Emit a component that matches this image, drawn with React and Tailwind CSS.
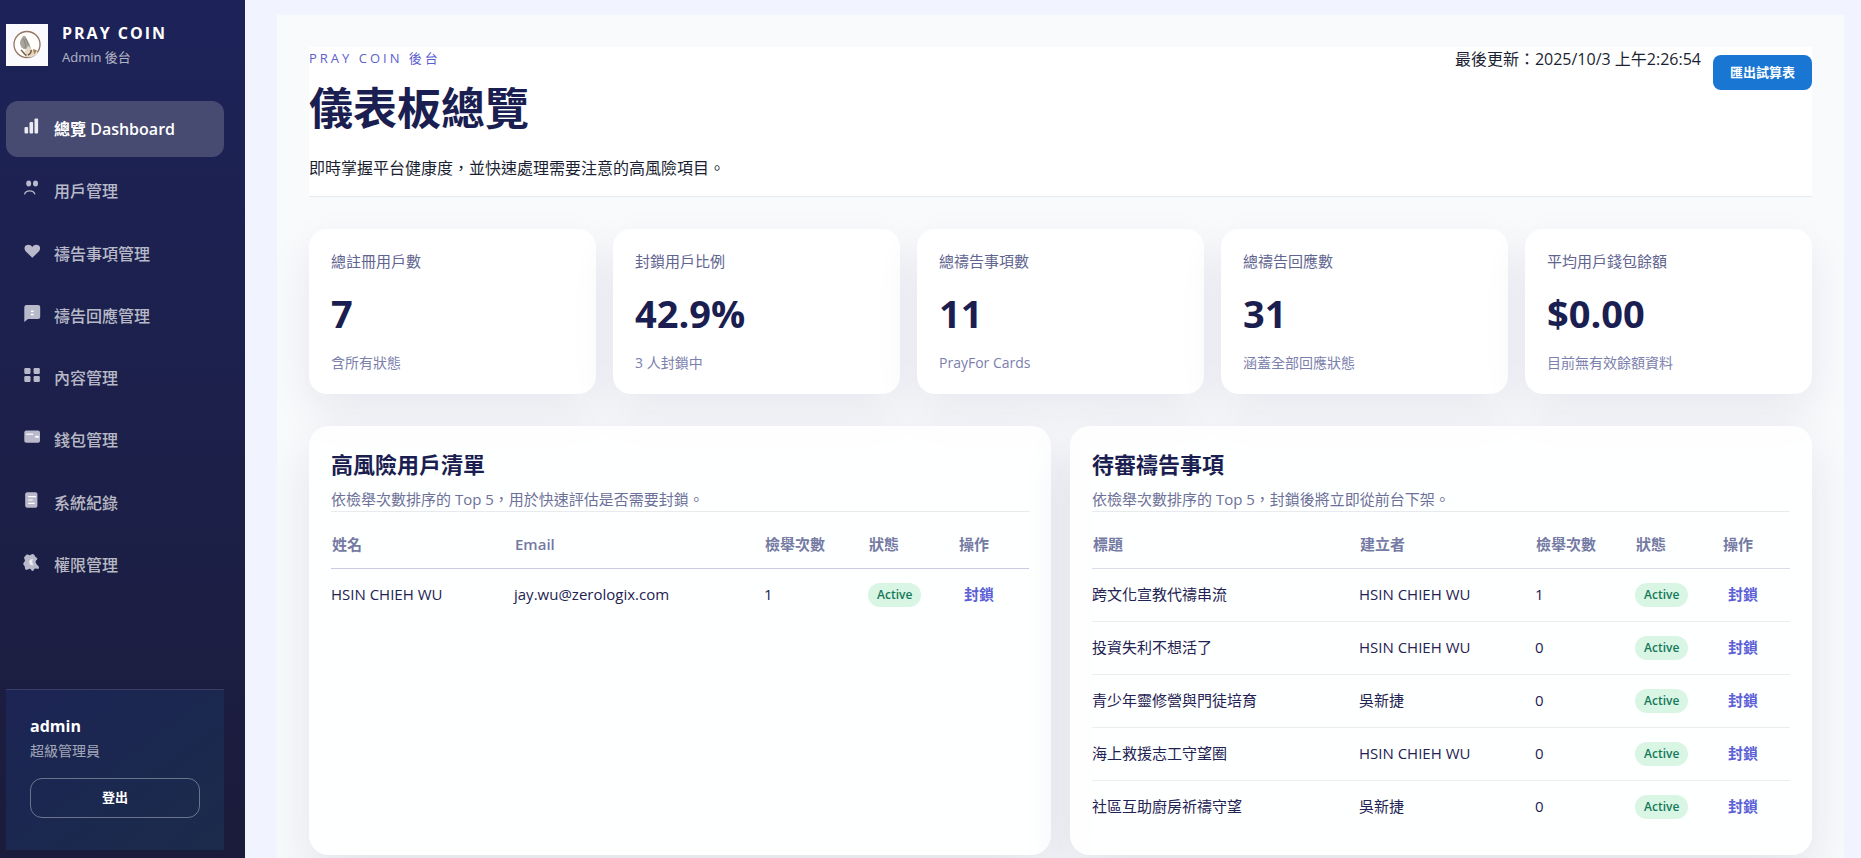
const NAV = [
  { label: "總覽 Dashboard", icon: "bars", active: true },
  { label: "用戶管理", icon: "users" },
  { label: "禱告事項管理", icon: "heart" },
  { label: "禱告回應管理", icon: "reply" },
  { label: "內容管理", icon: "grid" },
  { label: "錢包管理", icon: "wallet" },
  { label: "系統紀錄", icon: "log" },
  { label: "權限管理", icon: "gear" },
];

const STATS = [
  { label: "總註冊用戶數", value: "7", note: "含所有狀態" },
  { label: "封鎖用戶比例", value: "42.9%", note: "3 人封鎖中" },
  { label: "總禱告事項數", value: "11", note: "PrayFor Cards" },
  { label: "總禱告回應數", value: "31", note: "涵蓋全部回應狀態" },
  { label: "平均用戶錢包餘額", value: "$0.00", note: "目前無有效餘額資料" },
];

const USERS = [["HSIN CHIEH WU", "jay.wu@zerologix.com", 1]];

const PRAYERS = [
  ["跨文化宣教代禱串流", "HSIN CHIEH WU", 1],
  ["投資失利不想活了", "HSIN CHIEH WU", 0],
  ["青少年靈修營與門徒培育", "吳新捷", 0],
  ["海上救援志工守望圈", "HSIN CHIEH WU", 0],
  ["社區互助廚房祈禱守望", "吳新捷", 0],
];

const ICONS = {
  bars: (
    <g fill="currentColor">
      <rect x="0.500" y="9" width="3.600" height="6.500" rx="1" />
      <rect x="5.500" y="4" width="3.600" height="11.500" rx="1" />
      <rect x="10.500" y="0.500" width="3.600" height="15" rx="1" />
    </g>
  ),
  users: (
    <g>
      <ellipse cx="4.700" cy="3.500" rx="2.500" ry="2.900" fill="currentColor" />
      <ellipse cx="11.500" cy="3.500" rx="2.500" ry="2.900" fill="currentColor" />
      <path d="M.5 14.300c.6-2.400 2.600-3.500 5.200-3.500s4.600 1.100 5.200 3.500" fill="none" stroke="currentColor" strokeWidth="1.300" />
    </g>
  ),
  heart: (
    <path d="M8.300 14.800 1.600 8.200C0 6.400.2 3.800 1.800 2.600 3.900 1.200 6.800 1.600 8.300 4c1.500-2.400 4.400-2.800 6.500-1.400 1.600 1.200 1.800 3.800.2 5.600Z" fill="currentColor" />
  ),
  reply: (
    <g>
      <path d="M2.500 0h11.500A2.200 2.200 0 0 1 16.200 2.200v9.600a2.200 2.200 0 0 1-2.200 2.200H4l-3.700 2.900V2.200A2.200 2.200 0 0 1 2.500 0Z" fill="currentColor" />
      <rect x="6.800" y="5.400" width="3" height="1.500" rx=".7" fill="#fff" />
      <rect x="6.800" y="8.800" width="3" height="1.500" rx=".7" fill="#fff" />
    </g>
  ),
  grid: (
    <g fill="currentColor">
      <rect x="0.300" y="1" width="6.200" height="6" rx="1.200" />
      <rect x="9.600" y="1" width="6.200" height="6" rx="1.200" />
      <rect x="0.300" y="9" width="6.200" height="6" rx="1.200" />
      <rect x="9.600" y="9" width="6.200" height="6" rx="1.200" />
    </g>
  ),
  wallet: (
    <g>
      <rect x="0.300" y="1.500" width="15.700" height="12.300" rx="2" fill="currentColor" />
      <path d="M2 5.200H9.200" stroke="#fff" strokeWidth="1.200" />
      <rect x="11" y="6.800" width="4" height="1.900" rx=".9" fill="#fff" />
    </g>
  ),
  log: (
    <g>
      <rect x="1.200" y="0.200" width="12.200" height="15.600" rx="2" fill="currentColor" />
      <path d="M4.200 4.600h8M4.200 8h4.600M4.200 11.400h6.500" stroke="#fff" strokeWidth="1.200" />
    </g>
  ),
  gear: (
    <g>
      <path d="M2.300.8c1.200-.8 2.400.6 3.600.4C7.100 1 7.600-.2 9.300.2c1.700.3 1.300 2 2.300 2.800.8.600 2 .8 1.700 2-.2 1-1.600 1.300-1.700 2.500-.1 1.500 1 2.700 2 3.700 1 .8 1.900 2.300 1.200 3.300-1.200.7-2.700-.3-3.800 0-1.200.4-1 2.300-2.300 2.500-1.400.1-1.400-2-2.800-2.300-1.300-.2-2.200 1.300-3.800 1C.3 15.200 1.300 13.200.6 12.300 0 11.500-.9 10.700-.7 9.600c.2-1.200 1.700-1.700 1.700-3C1 5.400-.2 4.700.1 3.600.5 2.600 1.600 1.800 2.300.8Z" fill="currentColor" />
      <path d="M9 5A3.200 3.200 0 1 0 9.700 11C8 9.600 7.800 6.600 9 5Z" fill="#fff" fillOpacity=".7" />
    </g>
  ),
};

function Logo() {
  return (
    <svg viewBox="0 0 42 42" className="size-[42px] shrink-0" aria-hidden="true">
      <rect width="42" height="42" fill="#fafaff" />
      <circle cx="21" cy="20.500" r="13" fill="#fffefc" stroke="#957564" strokeWidth="1.300" />
      <path d="M14 20c-.3-3 1.200-5.500 3-7.800.8-.9 2-.5 2.500.3l4 7.500 2 6.500-3 3.500-2.500-4.500-4.500-2Z" fill="#aaa59c" />
      <path d="M17.500 14.500 20 22l-2.500 3M19.500 14l3 7" fill="none" stroke="#77736d" strokeWidth=".7" />
      <path d="M18 29c1.500-3.500 3-5.300 4.500-7l3.500 4 3-.5 3 3.500c-2.500 3.200-7 5-11 4Z" fill="#e6dac9" />
      <path d="M15 26c2 1.500 3 4.500 5.500 5.500M25 26c.5 2-1 4-3 5" fill="none" stroke="#76543c" strokeWidth="1.500" />
      <path d="m27 25 4 1.500-3 4Z" fill="#a57f55" />
    </svg>
  );
}

function Sidebar() {
  return (
    <aside className="flex w-[245px] shrink-0 flex-col bg-linear-to-b from-[#1d2359] to-[#1b1c3b] pt-[23px] pr-[21px] pb-2 pl-[6px]">
      <div className="flex items-center gap-[14px]">
        <Logo />
        <div>
          <p className="text-[16px] leading-5 font-bold tracking-[2px] text-white">PRAY COIN</p>
          <p className="mt-1 text-[13px] leading-5 text-white/65">Admin 後台</p>
        </div>
      </div>
      <nav className="mt-[34px] flex h-[492px] flex-col justify-between">
        {NAV.map((n) => (
          <a
            key={n.label}
            href="#"
            aria-current={n.active ? "page" : undefined}
            className={
              "flex h-14 items-center gap-3 rounded-xl pl-[18px] text-[16px] " +
              (n.active ? "bg-[#484b71] font-semibold text-white" : "font-medium text-white/70")
            }
          >
            <svg viewBox="0 0 18 18" className={"mb-1 size-[18px] overflow-visible " + (n.active ? "text-[#ebebf3]" : "text-[#b8bacb]")} aria-hidden="true">
              {ICONS[n.icon]}
            </svg>
            <span>{n.label}</span>
          </a>
        ))}
      </nav>
      <div className="mt-auto border-t border-[#3a3d66] bg-linear-to-br from-[#1c2454] to-[#1b2b4b] px-6 pt-6 pb-8">
        <p className="text-[16px] leading-6 font-bold text-white">admin</p>
        <p className="mt-[3px] text-[14px] leading-5 text-white/60">超級管理員</p>
        <button type="button" className="mt-[17px] h-10 w-full rounded-xl border border-white/35 text-[13px] font-semibold text-white">
          登出
        </button>
      </div>
    </aside>
  );
}

function StatCard({ label, value, note }) {
  return (
    <article className="rounded-[18px] bg-white px-[22px] pt-5 pb-[21px] shadow-[0_18px_45px_rgba(28,31,79,0.08)]">
      <p className="text-[15px] leading-6 text-[#5f6490]">{label}</p>
      <p className="mt-[18px] text-[38px] leading-[44px] font-bold text-[#1b1e50]">{value}</p>
      <p className="mt-[18px] text-[14px] leading-5 text-[#7b80ac]">{note}</p>
    </article>
  );
}

function Panel({ title, note, heads, cols, rows, line }) {
  return (
    <section className="rounded-[20px] bg-white/90 px-[22px] pt-[22px] pb-[21px] shadow-[0_20px_50px_rgba(28,31,79,0.1)]">
      <h2 className="text-[22px] leading-8 font-bold text-[#1b1e50]">{title}</h2>
      <p className="mt-[7px] text-[15px] leading-6 text-[#6d7199]">{note}</p>
      <table className="w-full table-fixed border-t border-[#e9eaee] text-left text-[15px]">
        <colgroup>
          {cols.map((c, i) => (
            <col key={i} className={c} />
          ))}
        </colgroup>
        <thead>
          <tr className={"h-[57px] border-b " + line}>
            {heads.map((h) => (
              <th key={h} scope="col" className="pt-2 pl-px text-[15px] font-semibold text-[#747aa3]">{h}</th>
            ))}
          </tr>
        </thead>
        <tbody>
          {rows.map(([a, b, n]) => (
            <tr key={a} className="h-[53px] border-b border-[#ededf1] text-[#1f2252] last:border-b-0">
              <td className="pb-[2px]">{a}</td>
              <td className="pb-[2px]">{b}</td>
              <td className="pb-[2px]">{n}</td>
              <td className="pb-[2px]">
                <span className="inline-flex h-6 items-center rounded-full bg-[#d9f5e4] px-[9px] text-[12px] font-semibold text-[#15795a]">Active</span>
              </td>
              <td className="pb-[2px]">
                <button type="button" className="px-[6px] text-[15px] font-semibold text-[#5c5fd6]">封鎖</button>
              </td>
            </tr>
          ))}
        </tbody>
      </table>
    </section>
  );
}

export default function App() {
  return (
    <div className="flex h-screen overflow-hidden bg-[#f1f4ff] font-['Open_Sans','Noto_Sans_CJK_TC',sans-serif]" lang="zh-Hant">
      <Sidebar />
      <main className="min-w-0 flex-1 overflow-y-auto pt-[15px] pr-[17px] pl-8 [scrollbar-width:none]">
        <div className="overflow-hidden bg-[#f9fafc] p-8">
          <header className="flex items-start justify-between border-b border-[#e7e9ec] bg-white pb-4 text-[#1b1f33]">
            <div>
              <p className="pt-px text-[13px] leading-5 tracking-[3px] text-[#5c60cf]">PRAY COIN 後台</p>
              <h1 className="mt-[10px] text-[44px] leading-[60px] font-bold text-[#1b1e50]">儀表板總覽</h1>
              <p className="mt-[18px] text-[16px] leading-6">即時掌握平台健康度，並快速處理需要注意的高風險項目。</p>
            </div>
            <div className="flex items-start gap-3">
              <p className="text-[16px] leading-6">最後更新：2025/10/3 上午2:26:54</p>
              <button type="button" className="mt-2 h-[35px] rounded-lg bg-[#1976d2] px-[17px] text-[13px] font-semibold text-white">
                匯出試算表
              </button>
            </div>
          </header>
          <div className="mt-8 grid grid-cols-5 gap-[17px]">
            {STATS.map((s) => (
              <StatCard key={s.label} {...s} />
            ))}
          </div>
          <div className="mt-8 grid grid-cols-2 gap-[19px]">
            <Panel
              title="高風險用戶清單"
              note="依檢舉次數排序的 Top 5，用於快速評估是否需要封鎖。"
              heads={["姓名", "Email", "檢舉次數", "狀態", "操作"]}
              cols={["", "w-[250px]", "w-[104px]", "w-[90px]", "w-[71px]"]}
              rows={USERS}
              line="border-[#c9cbe0]"
            />
            <Panel
              title="待審禱告事項"
              note="依檢舉次數排序的 Top 5，封鎖後將立即從前台下架。"
              heads={["標題", "建立者", "檢舉次數", "狀態", "操作"]}
              cols={["", "w-[176px]", "w-[100px]", "w-[87px]", "w-[68px]"]}
              rows={PRAYERS}
              line="border-[#dcdde8]"
            />
          </div>
        </div>
      </main>
    </div>
  );
}
